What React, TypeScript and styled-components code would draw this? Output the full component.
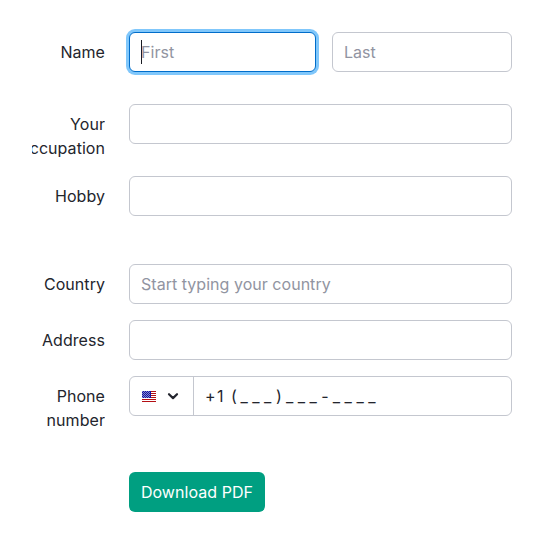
import React from "react";
import styled, { createGlobalStyle, css } from "styled-components";

const GlobalStyle = createGlobalStyle`
  *, *::before, *::after { box-sizing: border-box; }
  body { margin: 0; background: #fff; }
  body, input, button {
    font-family: Inter, "Liberation Sans", sans-serif;
    font-size: 16px;
    line-height: 24px;
    color: #23252d;
  }
`;

const Form = styled.form`
  display: flex;
  flex-direction: column;
  width: 544px;
  height: 544px;
  padding: 32px;
  overflow: hidden;
`;

const Row = styled.div<{ $gap?: number }>`
  display: grid;
  grid-template-columns: 73px 383px;
  column-gap: 24px;
  align-items: start;
  height: 40px;
  margin-bottom: ${({ $gap = 16 }) => $gap}px;
`;

const Label = styled.label`
  display: flex;
  flex-direction: column;
  align-items: flex-end;
  padding-top: 8px;
  overflow: hidden;
  white-space: nowrap;
  letter-spacing: 0.05px;
`;

const focusRing = css`
  border-color: #006dca;
  box-shadow: 0 0 0 3px #80c7fb;
`;

const Field = styled.div<{ $focused?: boolean }>`
  display: flex;
  align-items: center;
  min-width: 0;
  height: 40px;
  border: 1px solid #c4c7cf;
  border-radius: 6px;
  background: #fff;
  ${({ $focused }) => $focused && focusRing}
`;

const Input = styled.input`
  flex: 1;
  min-width: 0;
  height: 38px;
  padding: 0 11px;
  border: 0;
  outline: 0;
  background: transparent;
  letter-spacing: 0.03px;

  &::placeholder { color: #9194a1; opacity: 1; }
`;

const Caret = styled.span`
  width: 1px;
  height: 24px;
  margin: 0 -12px 0 11px;
  background: #191b23;
`;

const NameFields = styled.div`
  display: grid;
  grid-template-columns: 187px 180px;
  gap: 16px;
`;

const CountryCode = styled.button`
  display: flex;
  align-items: center;
  flex: none;
  gap: 9px;
  width: 64px;
  height: 38px;
  padding: 0 0 0 12px;
  border: 0;
  border-right: 1px solid #c4c7cf;
  background: transparent;
`;

const PhoneMask = styled.div`
  display: flex;
  flex: 1;
  padding: 0 11px;
  white-space: pre;
  outline: 0;
`;

const MaskText = styled.span<{ $width: number }>`
  width: ${({ $width }) => $width}px;
  letter-spacing: 1.5px;
`;

const MaskSlots = styled.span<{ $count: number }>`
  width: ${({ $count }) => $count * 11.8}px;
  letter-spacing: 4.5px;
`;

const SubmitButton = styled.button`
  grid-column: 2;
  justify-self: start;
  width: 136px;
  height: 40px;
  padding: 0;
  border: 0;
  border-radius: 6px;
  background: #009f81;
  color: #fff;
  font-weight: 400;
  letter-spacing: 0.06px;
  white-space: nowrap;
`;

const UsFlag = () => (
  <svg width="14" height="11" viewBox="0 0 14 11" shapeRendering="crispEdges">
    <rect width="14" height="11" fill="#fff" />
    {[0, 2, 4, 6, 8, 10].map((y) => (
      <rect key={y} y={y} width="14" height="1" fill="#b40f14" />
    ))}
    <rect width="9" height="7" fill="#1515a0" />
    {[0, 1, 2, 3, 4, 5, 6].flatMap((y) =>
      [0, 2, 4, 6].map((x) => (
        <rect key={`${x}-${y}`} x={x + (y % 2)} y={y} width="1" height="1" fill="#8585cd" />
      )),
    )}
  </svg>
);

const Chevron = () => (
  <svg width="16" height="16" viewBox="0 0 16 16" fill="none">
    <path d="M4 6.2 8 10.1 12 6.2" stroke="#23252e" strokeWidth="2.2" strokeLinecap="round" strokeLinejoin="round" />
  </svg>
);

export default function App() {
  return (
    <>
      <GlobalStyle />
      <Form>
        <Row $gap={32}>
          <Label htmlFor="first"><span>Name</span></Label>
          <NameFields>
            <Field $focused>
              <Caret />
              <Input id="first" placeholder="First" />
            </Field>
            <Field><Input placeholder="Last" /></Field>
          </NameFields>
        </Row>
        <Row $gap={32}>
          <Label htmlFor="occupation"><span>Your</span><span>Occupation</span></Label>
          <Field><Input id="occupation" /></Field>
        </Row>
        <Row $gap={48}>
          <Label htmlFor="hobby"><span>Hobby</span></Label>
          <Field><Input id="hobby" /></Field>
        </Row>
        <Row>
          <Label htmlFor="country"><span>Country</span></Label>
          <Field><Input id="country" placeholder="Start typing your country" /></Field>
        </Row>
        <Row>
          <Label htmlFor="address"><span>Address</span></Label>
          <Field><Input id="address" /></Field>
        </Row>
        <Row $gap={56}>
          <Label><span>Phone</span><span>number</span></Label>
          <Field>
            <CountryCode type="button" aria-label="United States">
              <UsFlag />
              <Chevron />
            </CountryCode>
            <PhoneMask role="textbox" aria-label="Phone number" tabIndex={0}>
              <MaskText $width={35.5}>+1 (</MaskText>
              <MaskSlots $count={3}>___</MaskSlots>
              <MaskText $width={10}>)</MaskText>
              <MaskSlots $count={3}>___</MaskSlots>
              <MaskText $width={11.5}>-</MaskText>
              <MaskSlots $count={4}>____</MaskSlots>
            </PhoneMask>
          </Field>
        </Row>
        <Row $gap={0}>
          <SubmitButton type="button">Download PDF</SubmitButton>
        </Row>
      </Form>
    </>
  );
}
